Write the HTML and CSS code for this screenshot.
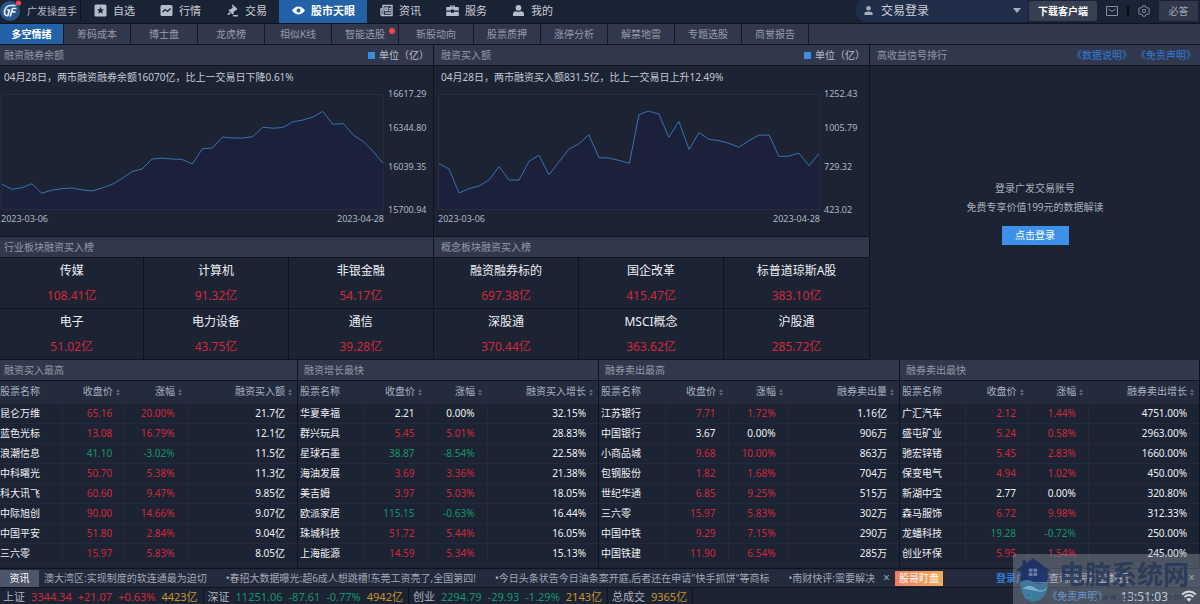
FILE: index.html
```html
<!DOCTYPE html>
<html lang="zh-CN">
<head>
<meta charset="utf-8">
<title>广发操盘手</title>
<link rel="stylesheet" href="styles.css">
</head>
<body>
<div class="app">
  <header class="topbar">
    <div class="brand">
      <svg class="brand-logo" viewBox="0 0 22 22"><circle cx="10" cy="11" r="10" fill="#27568a"/><g fill="none" stroke="#e6edf5" stroke-width="1.700"><path d="M15.500 5.500H10Q5.500 6 4.500 11.500Q4 16 8 15.500L9.300 10H7"/><path d="M16.500 8.500H12.500L10.200 16.500M11.800 11.800H15.500"/></g><circle cx="18.500" cy="3" r="2.600" fill="#f2434b"/></svg>
      <span>广发操盘手</span>
    </div>
    <nav class="mainnav">
      <a href="#"><svg viewBox="0 0 13 13"><path fill="currentColor" fill-rule="evenodd" d="M2 .5h9Q12.500.5 12.500 2v9q0 1.500-1.500 1.500H2Q.5 12.500.5 11V2Q.5.5 2 .5ZM6.500 2.800 5.500 5.200 3 5.400 4.900 7.100 4.300 9.700 6.500 8.300 8.700 9.700 8.100 7.100 10 5.400 7.500 5.200Z"/></svg>自选</a>
      <a href="#"><svg viewBox="0 0 13 13"><rect x=".5" y="1" width="12" height="11" rx="1.500" fill="currentColor"/><path d="M2.500 8 5 5.500 7.500 7.500 10.500 4.500" fill="none" stroke="#1a2334" stroke-width="1.300"/></svg>行情</a>
      <a href="#"><svg viewBox="0 0 13 13"><path fill="currentColor" d="M6.500.5 11.500 5 10 6.500 9.500 6.200 7.200 8.700 8 9.500 6.700 10.500 2.500 6.300 3.700 5 4.500 5.600 7 3 5.700 1.500ZM3.500 8 5 9.500 2.500 11 1 10.800ZM7 11h5v1.500H7Z"/></svg>交易</a>
      <a href="#" class="active"><svg viewBox="0 0 13 13"><path fill="currentColor" fill-rule="evenodd" d="M0 6.500Q3 2.500 6.500 2.500T13 6.500Q10 10.500 6.500 10.500T0 6.500ZM6.500 4.500a2 2 0 1 0 0 4 2 2 0 1 0 0-4Z"/></svg>股市天眼</a>
      <a href="#"><svg viewBox="0 0 13 13"><path fill="none" stroke="currentColor" stroke-width="1.400" d="M3 1.500h9v10H2Q1 11.500 1 10V5h2ZM3 5v6M5 4h2.500v2.500H5ZM9 4.500h2M9 6.500h2M5 9h6"/></svg>资讯</a>
      <a href="#"><svg viewBox="0 0 13 13"><path fill="currentColor" fill-rule="evenodd" d="M4 3V1.500h5V3h3q.8 0 .8.800V6.500H8V5.500H5v1H.2V3.800Q.2 3 1 3ZM5.200 3h2.600v-.5H5.200ZM.2 7.700H5v1h3v-1h4.800V12H.2Z"/></svg>服务</a>
      <a href="#"><svg viewBox="0 0 13 13"><circle cx="6.500" cy="3.800" r="2.900" fill="currentColor"/><path fill="currentColor" d="M1 12V10Q1 7.500 4 7.200L6.500 8 9 7.200Q12 7.500 12 10V12Z"/></svg>我的</a>
    </nav>
    <div class="tools">
      <label class="account">
        <svg viewBox="0 0 10 11"><circle cx="5" cy="3" r="2.500" fill="currentColor"/><path fill="currentColor" d="M.5 10.500V8.500Q.5 6.500 5 6.500T9.500 8.500V10.500Z"/></svg>
        <select aria-label="交易登录"><option>交易登录</option></select>
        <svg class="caret" viewBox="0 0 8 5"><path d="M0 0h8L4 5Z" fill="currentColor"/></svg>
      </label>
      <button class="btn-download">下载客户端</button>
      <button class="btn-icon" aria-label="消息"><svg viewBox="0 0 12 12"><path d="M.5 1.500h11v9H.5ZM2.500 4 6 6.500 9.500 4" fill="none" stroke="currentColor"/></svg></button>
      <span class="divider"></span>
      <button class="btn-icon" aria-label="设置"><svg viewBox="0 0 12 12"><path d="M4.700.8h2.600L7.700 2.300 9.300 3.100 10.700 2.800 11.500 5 10.600 6 11.500 7.200 10.600 9.300 9.200 9 7.700 9.800 7.300 11.200H4.700L4.300 9.800 2.800 9 1.400 9.300.5 7.200 1.400 6 .5 5 1.300 2.800 2.700 3.100 4.300 2.300Z" fill="none" stroke="currentColor"/><circle cx="6" cy="6" r="1.700" fill="none" stroke="currentColor"/></svg></button>
      <button class="btn-answer">必答</button>
    </div>
  </header>

  <nav class="tabs">
    <a href="#" class="active">多空情绪</a><a href="#">筹码成本</a><a href="#">博士盘</a><a href="#">龙虎榜</a><a href="#">相似K线</a><a href="#" class="has-dot">智能选股<i class="dot"></i></a><a href="#" class="wide">新股动向</a><a href="#">股票质押</a><a href="#">涨停分析</a><a href="#">解禁地雷</a><a href="#">专题选股</a><a href="#">商誉报告</a>
  </nav>

  <main class="overview">
    <section class="market">
      <h2 class="bar">融资融券余额<span class="legend">单位（亿）</span></h2>
      <div class="chart-panel">
        <p class="summary">04月28日，两市融资融券余额16070亿，比上一交易日下降0.61%</p>
        <div class="chart">
          <svg class="plot" viewBox="6 28 1145 347" preserveAspectRatio="none"><path class="area" d="M6 375V300L36 315 66 310 96 298 125 327 155 318 186 313 217 311 247 317 277 320 307 311 337 300 367 282 397 261 427 253 457 223 487 220 517 223 547 224 578 238 608 192 638 189 669 156 699 159 729 159 759 155 790 126 820 129 850 127 880 110 911 104 941 95 970 78 1000 117 1032 115 1062 150 1092 170 1121 199 1151 236V375Z"/><polyline class="line" points="6,300 36,315 66,310 96,298 125,327 155,318 186,313 217,311 247,317 277,320 307,311 337,300 367,282 397,261 427,253 457,223 487,220 517,223 547,224 578,238 608,192 638,189 669,156 699,159 729,159 759,155 790,126 820,129 850,127 880,110 911,104 941,95 970,78 1000,117 1032,115 1062,150 1092,170 1121,199 1151,236"/></svg>
          <div class="axis-y"><span>16617.29</span><span>16344.80</span><span>16039.35</span><span>15700.94</span></div>
          <div class="axis-x"><span>2023-03-06</span><span>2023-04-28</span></div>
        </div>
      </div>
      <h2 class="bar">行业板块融资买入榜</h2>
      <div class="sectors">
        <div><b>传媒</b><span>108.41亿</span></div><div><b>计算机</b><span>91.32亿</span></div><div><b>非银金融</b><span>54.17亿</span></div>
        <div><b>电子</b><span>51.02亿</span></div><div><b>电力设备</b><span>43.75亿</span></div><div><b>通信</b><span>39.28亿</span></div>
      </div>
    </section>
    <section class="market inset">
      <h2 class="bar">融资买入额<span class="legend">单位（亿）</span></h2>
      <div class="chart-panel">
        <p class="summary">04月28日，两市融资买入额831.5亿，比上一交易日上升12.49%</p>
        <div class="chart">
          <svg class="plot" viewBox="25 28 1144 347" preserveAspectRatio="none"><path class="area" d="M25 375V237L55 253 85 326 116 313 146 305 176 286 206 246 236 287 266 287 296 230 326 211 356 271 386 232 416 193 446 177 476 149 507 219 537 220 567 227 598 236 627 88 656 77 687 86 717 157 747 108 778 194 808 142 838 163 868 167 898 175 928 187 958 167 988 150 1019 150 1048 215 1078 214 1108 205 1139 243 1169 206V375Z"/><polyline class="line" points="25,237 55,253 85,326 116,313 146,305 176,286 206,246 236,287 266,287 296,230 326,211 356,271 386,232 416,193 446,177 476,149 507,219 537,220 567,227 598,236 627,88 656,77 687,86 717,157 747,108 778,194 808,142 838,163 868,167 898,175 928,187 958,167 988,150 1019,150 1048,215 1078,214 1108,205 1139,243 1169,206"/></svg>
          <div class="axis-y"><span>1252.43</span><span>1005.79</span><span>729.32</span><span>423.02</span></div>
          <div class="axis-x"><span>2023-03-06</span><span>2023-04-28</span></div>
        </div>
      </div>
      <h2 class="bar">概念板块融资买入榜</h2>
      <div class="sectors">
        <div><b>融资融券标的</b><span>697.38亿</span></div><div><b>国企改革</b><span>415.47亿</span></div><div><b>标普道琼斯A股</b><span>383.10亿</span></div>
        <div><b>深股通</b><span>370.44亿</span></div><div><b>MSCI概念</b><span>363.62亿</span></div><div><b>沪股通</b><span>285.72亿</span></div>
      </div>
    </section>
    <section class="market inset signals">
      <h2 class="bar">高收益信号排行<span class="links"><a href="#">《数据说明》</a><a href="#">《免责声明》</a></span></h2>
      <div class="login">
        <p>登录广发交易账号</p>
        <p>免费专享价值199元的数据解读</p>
        <button class="btn-login">点击登录</button>
      </div>
    </section>
  </main>

  <section class="rankings">
    <section class="ranking first">
      <h2 class="bar">融资买入最高</h2>
      <table>
        <thead><tr><th>股票名称</th><th class="sort">收盘价</th><th class="sort">涨幅</th><th class="sort">融资买入额</th></tr></thead>
        <tbody>
          <tr class="up"><td>昆仑万维</td><td>65.16</td><td>20.00%</td><td>21.7亿</td></tr>
          <tr class="up"><td>蓝色光标</td><td>13.08</td><td>16.79%</td><td>12.1亿</td></tr>
          <tr class="down"><td>浪潮信息</td><td>41.10</td><td>-3.02%</td><td>11.5亿</td></tr>
          <tr class="up"><td>中科曙光</td><td>50.70</td><td>5.38%</td><td>11.3亿</td></tr>
          <tr class="up"><td>科大讯飞</td><td>60.60</td><td>9.47%</td><td>9.85亿</td></tr>
          <tr class="up"><td>中际旭创</td><td>90.00</td><td>14.66%</td><td>9.07亿</td></tr>
          <tr class="up"><td>中国平安</td><td>51.80</td><td>2.84%</td><td>9.04亿</td></tr>
          <tr class="up"><td>三六零</td><td>15.97</td><td>5.83%</td><td>8.05亿</td></tr>
        </tbody>
      </table>
    </section>
    <section class="ranking">
      <h2 class="bar">融资增长最快</h2>
      <table>
        <thead><tr><th>股票名称</th><th class="sort">收盘价</th><th class="sort">涨幅</th><th class="sort">融资买入增长</th></tr></thead>
        <tbody>
          <tr><td>华夏幸福</td><td>2.21</td><td>0.00%</td><td>32.15%</td></tr>
          <tr class="up"><td>群兴玩具</td><td>5.45</td><td>5.01%</td><td>28.83%</td></tr>
          <tr class="down"><td>星球石墨</td><td>38.87</td><td>-8.54%</td><td>22.58%</td></tr>
          <tr class="up"><td>海油发展</td><td>3.69</td><td>3.36%</td><td>21.38%</td></tr>
          <tr class="up"><td>美吉姆</td><td>3.97</td><td>5.03%</td><td>18.05%</td></tr>
          <tr class="down"><td>欧派家居</td><td>115.15</td><td>-0.63%</td><td>16.44%</td></tr>
          <tr class="up"><td>珠城科技</td><td>51.72</td><td>5.44%</td><td>16.05%</td></tr>
          <tr class="up"><td>上海能源</td><td>14.59</td><td>5.34%</td><td>15.13%</td></tr>
        </tbody>
      </table>
    </section>
    <section class="ranking">
      <h2 class="bar">融券卖出最高</h2>
      <table>
        <thead><tr><th>股票名称</th><th class="sort">收盘价</th><th class="sort">涨幅</th><th class="sort">融券卖出量</th></tr></thead>
        <tbody>
          <tr class="up"><td>江苏银行</td><td>7.71</td><td>1.72%</td><td>1.16亿</td></tr>
          <tr><td>中国银行</td><td>3.67</td><td>0.00%</td><td>906万</td></tr>
          <tr class="up"><td>小商品城</td><td>9.68</td><td>10.00%</td><td>863万</td></tr>
          <tr class="up"><td>包钢股份</td><td>1.82</td><td>1.68%</td><td>704万</td></tr>
          <tr class="up"><td>世纪华通</td><td>6.85</td><td>9.25%</td><td>515万</td></tr>
          <tr class="up"><td>三六零</td><td>15.97</td><td>5.83%</td><td>302万</td></tr>
          <tr class="up"><td>中国中铁</td><td>9.29</td><td>7.15%</td><td>290万</td></tr>
          <tr class="up"><td>中国铁建</td><td>11.90</td><td>6.54%</td><td>285万</td></tr>
        </tbody>
      </table>
    </section>
    <section class="ranking">
      <h2 class="bar">融券卖出最快</h2>
      <table>
        <thead><tr><th>股票名称</th><th class="sort">收盘价</th><th class="sort">涨幅</th><th class="sort">融券卖出增长</th></tr></thead>
        <tbody>
          <tr class="up"><td>广汇汽车</td><td>2.12</td><td>1.44%</td><td>4751.00%</td></tr>
          <tr class="up"><td>盛屯矿业</td><td>5.24</td><td>0.58%</td><td>2963.00%</td></tr>
          <tr class="up"><td>驰宏锌锗</td><td>5.45</td><td>2.83%</td><td>1660.00%</td></tr>
          <tr class="up"><td>保变电气</td><td>4.94</td><td>1.02%</td><td>450.00%</td></tr>
          <tr><td>新湖中宝</td><td>2.77</td><td>0.00%</td><td>320.80%</td></tr>
          <tr class="up"><td>森马服饰</td><td>6.72</td><td>9.98%</td><td>312.33%</td></tr>
          <tr class="down"><td>龙蟠科技</td><td>19.28</td><td>-0.72%</td><td>250.00%</td></tr>
          <tr class="up"><td>创业环保</td><td>5.95</td><td>1.54%</td><td>245.00%</td></tr>
        </tbody>
      </table>
    </section>
  </section>

  <div class="ticker">
    <strong class="ticker-tag">资讯</strong>
    <div class="news"><a href="#">澳大湾区:实现制度的软连通最为迫切</a><a href="#">•春招大数据曝光:超6成人想跳槽!东莞工资亮了,全国第四!</a><a href="#">•今日头条状告今日油条案开庭,后者还在申请"快手抓饼"等商标</a><a href="#">•南财快评:需要解决</a></div>
    <button class="close" aria-label="关闭资讯">×</button>
    <strong class="watch-tag">股哥盯盘</strong>
    <p class="watch"><a href="#">登录广发通</a>,查询股哥盯盘数据</p>
    <button class="close" aria-label="关闭盯盘">×</button>
  </div>

  <footer class="indices">
    <div><span>上证</span><span class="red">3344.34</span><span class="red">+21.07</span><span class="red">+0.63%</span><span class="gold">4423亿</span></div>
    <div><span>深证</span><span class="green">11251.06</span><span class="green">-87.61</span><span class="green">-0.77%</span><span class="gold">4942亿</span></div>
    <div><span>创业</span><span class="green">2294.79</span><span class="green">-29.93</span><span class="green">-1.29%</span><span class="gold">2143亿</span></div>
    <div><span>总成交</span><span class="gold">9365亿</span></div>
    <div class="status">
      <svg class="search" viewBox="0 0 10 10"><circle cx="4.200" cy="4.200" r="3.200" fill="none" stroke="currentColor" stroke-width="1.200"/><path d="M6.500 6.500 9.500 9.500" stroke="currentColor" stroke-width="1.400"/></svg>
      <a href="#">《免责声明》</a>
      <time>13:51:03</time>
      <svg class="wifi" viewBox="0 0 16 12"><path d="M1 4.500Q8-1.500 15 4.500M3.500 7Q8 3 12.500 7" fill="none" stroke="currentColor" stroke-width="1.800"/><path d="M5.500 9Q8 7 10.500 9L8 11.800Z" fill="currentColor"/></svg>
    </div>
  </footer>

  <div class="watermark">
    <svg viewBox="0 0 38 48"><path d="M19 4 36 16.500H33V27H7V16.500H2L9 11V6h3v3Z" fill="#182d66"/><path d="M15 14h8v7h-8Z" fill="#7184b0"/><path d="M19 14v7M15 17.500h8" stroke="#182d66"/><path d="M7 27Q13 23 19 27T33 27V30Q32 44 20 46Q8 44 7 30Z" fill="#3c7fa6"/><path d="M9 33Q16 28 22 33T33 31Q31 37 25 36T9 33Z" fill="#86bfd8"/></svg>
    <div><b>电脑系统网</b><small>w w w . d n x t w . c o m</small></div>
  </div>
</div>
</body>
</html>
```
FILE: styles.css
```css
* { box-sizing: border-box; }
body {
  margin: 0;
  background: #1c2333;
  color: #c3c9d4;
  font: 10px/20px "Noto Sans", "Noto Sans CJK SC", sans-serif;
}
a { color: inherit; text-decoration: none; }
p, h2 { margin: 0; font-size: 10px; font-weight: 400; }
button, select { font: inherit; color: inherit; border: 0; padding: 0; background: none; }
svg { display: block; flex: none; }
.app { position: relative; display: flex; flex-direction: column; min-height: 100vh; overflow: hidden; }

.topbar { display: flex; height: 24px; padding-bottom: 2px; background: #1a2334; border-bottom: 1px solid #0e1322; }
.brand { display: flex; align-items: center; gap: 5px; width: 81px; border-right: 1px solid #0e1322; color: #b4bac6; }
.brand-logo { width: 22px; height: 22px; }
.mainnav { display: flex; margin-bottom: -2px; font-size: 11px; color: #c9cdd6; }
.mainnav a { display: flex; align-items: center; gap: 6px; padding: 0 12px 2px 13px; }
.mainnav svg { width: 13px; height: 13px; color: #b5bccb; }
.mainnav .active { background: #2462a8; color: #fff; font-weight: 700; }
.mainnav .active svg { color: #fff; }
.tools { display: flex; align-items: center; margin-left: auto; padding-right: 2px; }
.account { display: flex; align-items: center; gap: 8px; width: 172px; height: 23px; padding: 0 7px 0 8px; background: #212e49; border-radius: 10px 0 0 10px; color: #a4adbd; }
.account svg { width: 9px; height: 11px; }
.account .caret { width: 8px; height: 5px; }
.account select { flex: 1; appearance: none; font-size: 12px; color: #c9cdd6; }
.btn-download { width: 68px; height: 20px; margin: 0 9px 0 1px; background: #374053; border-radius: 2px; color: #fff; font-weight: 700; }
.btn-icon svg { width: 12px; height: 12px; color: #8992a3; }
.divider { width: 2px; height: 10px; margin: 0 9px; background: #090d18; }
.btn-answer { width: 39px; height: 20px; margin-left: 9px; background: #303849; color: #a2a8b5; }

.tabs { display: flex; height: 21px; background: #32384b; border-bottom: 1px solid #0e1322; color: #969cab; }
.tabs a { position: relative; width: 67px; text-align: center; border-right: 1px solid #131828; }
.tabs .active { width: 64px; background: #2462a8; color: #fff; font-weight: 700; }
.tabs .wide { width: 75px; }
.dot { position: absolute; top: 4px; right: 3px; width: 6px; height: 6px; border-radius: 50%; background: #f2434b; }

.bar { display: flex; height: 21px; padding: 0 4px; line-height: 20px; background: #32384b; border-bottom: 1px solid #0e1322; color: #9298a6; }
.legend { display: flex; align-items: center; gap: 4px; margin-left: auto; color: #b9bfca; }
.legend::before { content: ""; width: 7px; height: 7px; background: #3e8be6; }
.overview { display: grid; grid-template-columns: 434fr 436fr 330fr; }
.market { display: flex; flex-direction: column; border-right: 1px solid #0e1322; }
.market:last-child { border-right: 0; }
.inset .bar { padding-left: 7px; }
.chart-panel { padding: 0 0 8px 1px; border-bottom: 1px solid #0e1322; }
.inset .chart-panel { padding-left: 4px; }
.summary { padding: 1px 0 7px 3px; }
.chart { display: grid; grid-template-columns: 1fr 49px; grid-template-rows: 116px 18px; font-size: 9px; line-height: 12px; color: #aeb8c6; }
.plot { width: 100%; height: 100%; border: 1px solid #252d41; }
.area { fill: #1b213b; }
.line { fill: none; stroke: #3a73b2; stroke-width: 1; vector-effect: non-scaling-stroke; }
.axis-y { display: grid; grid-template-rows: 34px 39px 43px 12px; margin: -6px 0; padding-left: 4px; }
.axis-x { display: flex; justify-content: space-between; padding-top: 3px; }
.sectors { display: grid; grid-template-columns: repeat(3, 1fr); font-size: 12px; line-height: 25px; text-align: center; }
.sectors div { display: flex; flex-direction: column; height: 51px; border-right: 1px solid #0e1322; border-bottom: 1px solid #0e1322; }
.sectors div:nth-child(3n) { border-right: 0; }
.sectors b { font-weight: 400; color: #eef0f4; }
.sectors span { color: #d3283c; }
.links { display: flex; gap: 4px; margin-left: auto; color: #2f7cdb; }
.login { display: flex; flex: 1; flex-direction: column; align-items: center; justify-content: center; padding-bottom: 2px; line-height: 19px; color: #a9b0bd; }
.btn-login { width: 67px; height: 19px; margin-top: 9px; background: #3e91ea; color: #fff; }

.rankings { display: grid; flex: 1; grid-template-columns: 298fr 301fr 301fr 300fr; }
.ranking { border-right: 1px solid #0e1322; }
.ranking .bar { padding-left: 6px; }
.first .bar { padding-left: 4px; }
.ranking table { width: 100%; border-collapse: collapse; table-layout: fixed; color: #f0f2f5; }
.ranking th, .ranking td { height: 20px; padding: 0 12px 0 0; line-height: 19px; font-weight: 400; text-align: right; border-right: 1px solid #222a3b; border-bottom: 1px solid #222a3b; white-space: nowrap; }
.ranking th { height: 22px; background: #232b3c; color: #a9b3c2; border-right: 0; }
.ranking th:first-child, .ranking td:first-child { width: 22%; padding: 0 0 0 2px; text-align: left; }
.ranking.first th:first-child, .ranking.first td:first-child { width: 21%; padding-left: 0; }
.ranking th:nth-child(2) { width: 21%; }
.ranking th:nth-child(3) { width: 20%; }
.first th:nth-child(3) { width: 21%; }
.ranking td:last-child { border-right: 0; }
.sort { position: relative; }
.sort::before, .sort::after { content: ""; position: absolute; right: 5px; border: 2px solid transparent; }
.sort::before { top: 6px; border-bottom: 3px solid #59647a; }
.sort::after { bottom: 5px; border-top: 3px solid #59647a; }
.up td:nth-child(2), .up td:nth-child(3), .red { color: #d3283c; }
.down td:nth-child(2), .down td:nth-child(3), .green { color: #14966a; }
.gold { color: #c9962c; }

.ticker { display: flex; align-items: center; height: 19px; background: #222a3b; border-top: 1px solid #0e1322; line-height: 17px; white-space: nowrap; }
.ticker-tag { width: 39px; background: #4d5569; color: #fff; text-align: center; font-weight: 400; }
.news { display: flex; gap: 19px; width: 839px; padding-left: 5px; overflow: hidden; color: #a3a9b6; }
.close { width: 17px; font-size: 12px; line-height: 16px; color: #99a1b0; }
.watch-tag { width: 48px; line-height: 15px; background: linear-gradient(90deg, #ee7e65, #f0ad59); color: #fff; text-align: center; font-weight: 400; }
.watch { flex: 1; padding-left: 53px; }
.watch a { color: #2f7cdb; font-weight: 700; }
.indices { display: flex; height: 17px; border-top: 1px solid #0e1322; font-size: 11px; line-height: 17px; white-space: nowrap; color: #b0b6c2; }
.indices > div { display: flex; gap: 6px; padding: 0 5px 0 3px; border-right: 1px solid #0e1322; }
.indices > div + div { padding-left: 4px; }
.indices > .status { align-items: center; gap: 13px; margin-left: auto; padding-right: 3px; border: 0; }
.status a { font-size: 10px; color: #4a93e8; }
.status time { font-size: 12px; color: #dfe3ea; }
.search { width: 10px; height: 10px; color: #6fb6e0; }
.wifi { width: 16px; height: 12px; color: #fff; }

.watermark { position: absolute; right: 0; bottom: 0; display: flex; gap: 6px; width: 187px; height: 50px; background: rgba(150, 155, 168, 0.4); color: rgba(38, 57, 88, 0.9); pointer-events: none; }
.watermark svg { width: 40px; height: 50px; opacity: 0.85; }
.watermark b { display: block; font-size: 26px; line-height: 38px; font-family: "Noto Sans CJK SC", sans-serif; white-space: nowrap; }
.watermark small { display: block; padding-right: 8px; font-size: 8px; line-height: 10px; text-align: right; }
```
